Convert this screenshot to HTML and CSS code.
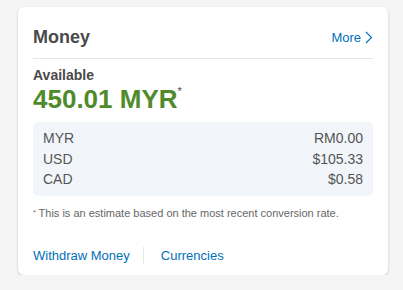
FILE: index.html
```html
<!DOCTYPE html>
<html lang="en">
<head>
    <meta charset="UTF-8">
    <meta name="viewport" content="width=device-width, initial-scale=1.0">
    <title>Money</title>
    <link rel="stylesheet" href="styles.css">
</head>
<body>
    <div class="card">
        <div class="card-header">
            <h2>Money</h2>
            <a href="#" class="more">More
                <svg width="8" height="13" viewBox="0 0 8 13"><path d="M1 1l5.5 5.5L1 12" fill="none" stroke="#0070ba" stroke-width="1.1"/></svg>
            </a>
        </div>
        <div class="available">
            <div class="label">Available</div>
            <div class="amount">450.01 MYR<sup>*</sup></div>
        </div>
        <div class="balances">
            <div class="row"><span>MYR</span><span>RM0.00</span></div>
            <div class="row"><span>USD</span><span>$105.33</span></div>
            <div class="row"><span>CAD</span><span>$0.58</span></div>
        </div>
        <p class="note"><sup>*</sup> This is an estimate based on the most recent conversion rate.</p>
        <div class="links">
            <a href="#">Withdraw Money</a>
            <a href="#">Currencies</a>
        </div>
    </div>
</body>
</html>
```

FILE: styles.css
```css
body {
    margin: 0;
    padding: 7px 15px 0 18px;
    font-family: "Liberation Sans", Arial, sans-serif;
    background-color: #f5f5f5;
    color: #4a4a4a;
}
a {
    color: #0070ba;
    text-decoration: none;
}
.card {
    width: 340px;
    padding: 0 15px 11px;
    background-color: #fff;
    border-radius: 6px;
    box-shadow: 0 1px 3px rgba(0, 0, 0, 0.18);
}
.card-header {
    display: flex;
    justify-content: space-between;
    align-items: center;
    padding: 19px 0 10px;
    border-bottom: 1px solid #e6e6e6;
}
.card-header h2 {
    margin: 0;
    font-size: 18px;
    line-height: 22px;
    color: #4a4a4a;
}
.more {
    display: flex;
    align-items: center;
    gap: 4px;
    font-size: 13px;
    padding-top: 1px;
}
.available {
    padding-top: 8px;
}
.label {
    font-size: 14px;
    font-weight: bold;
    line-height: 17px;
}
.amount {
    font-size: 26px;
    font-weight: bold;
    line-height: 29px;
    margin-top: 1px;
    color: #4f8b2b;
}
.amount sup {
    font-size: 11px;
    vertical-align: top;
    line-height: 12px;
    color: #4a4a4a;
    font-weight: normal;
}
.balances {
    margin-top: 8px;
    padding: 6px 10px 6px 10px;
    background-color: #f2f6fa;
    border-radius: 5px;
}
.row {
    display: flex;
    justify-content: space-between;
    font-size: 14px;
    line-height: 20.5px;
    color: #555;
}
.note {
    margin: 10px 0 0;
    font-size: 11px;
    line-height: 14px;
    color: #666;
}
.note sup {
    font-size: 7px;
    vertical-align: top;
}
.links {
    display: flex;
    align-items: center;
    margin-top: 27px;
    font-size: 13px;
    line-height: 17px;
}
.links a + a {
    margin-left: 13px;
    padding-left: 17px;
    border-left: 1px solid #e6e6e6;
}
```
